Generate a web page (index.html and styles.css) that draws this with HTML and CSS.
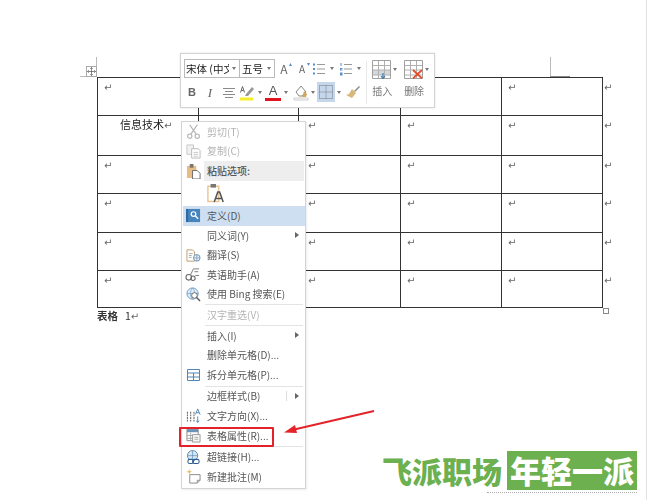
FILE: index.html
```html
<!DOCTYPE html>
<html lang="zh-CN">
<head>
    <meta charset="UTF-8">
    <title>表格属性</title>
    <link rel="stylesheet" href="styles.css">
</head>
<body>
<div class="page">
    <div class="doc">
        <table class="word-table">
            <colgroup><col class="c101"><col class="c100"><col class="c102"><col class="c101"><col class="c101"><col class="c17"></colgroup>
            <tr class="h38"><td><i>↵</i></td><td></td><td></td><td></td><td><i>↵</i></td><td class="end"><i>↵</i></td></tr>
            <tr class="h40"><td class="title">信息技术<i>↵</i></td><td></td><td><i>↵</i></td><td><i>↵</i></td><td><i>↵</i></td><td class="end"><i>↵</i></td></tr>
            <tr class="h38"><td><i>↵</i></td><td></td><td><i>↵</i></td><td><i>↵</i></td><td><i>↵</i></td><td class="end"><i>↵</i></td></tr>
            <tr class="h39"><td><i>↵</i></td><td></td><td><i>↵</i></td><td><i>↵</i></td><td><i>↵</i></td><td class="end"><i>↵</i></td></tr>
            <tr class="h38"><td><i>↵</i></td><td></td><td><i>↵</i></td><td><i>↵</i></td><td><i>↵</i></td><td class="end"><i>↵</i></td></tr>
            <tr class="h37"><td><i>↵</i></td><td></td><td><i>↵</i></td><td><i>↵</i></td><td><i>↵</i></td><td class="end"><i>↵</i></td></tr>
        </table>
        <p class="caption"><b>表格</b><span class="num">1</span><i>↵</i></p>
    </div>

    <span class="mark mark-h"></span>
    <span class="mark mark-v"></span>
    <span class="mark mark-r"></span>
    <span class="mark mark-rd"></span>
    <div class="move-handle">
        <svg width="9" height="9" viewBox="0 0 9 9"><path d="M4.5 .5v8M.5 4.5h8M3.2 1.8l1.3-1.3 1.3 1.3M3.2 7.2l1.3 1.3 1.3-1.3M1.8 3.2L.5 4.5l1.3 1.3M7.2 3.2l1.3 1.3-1.3 1.3" fill="none" stroke="#555" stroke-width=".7"/></svg>
    </div>
    <div class="size-handle"></div>

    <div class="toolbar">
        <div class="tools">
            <div class="tool-row">
                <div class="combo combo-font"><span>宋体 (中文</span><em class="caret"></em></div>
                <div class="combo combo-size"><span>五号</span><em class="caret"></em></div>
                <div class="btn w18"><span class="big-a">A</span><sup class="up">▴</sup></div>
                <div class="btn w18"><span class="small-a">A</span><sup class="down">▾</sup></div>
                <div class="btn">
                    <svg width="14" height="14" viewBox="0 0 14 14"><path d="M5 2.500h8M5 7h8M5 11.500h8" stroke="#999" fill="none"/><path d="M1 1.500h2v2H1zM1 6h2v2H1zM1 10.500h2v2H1z" fill="#5a8fc6"/></svg>
                </div>
                <em class="caret arrow"></em>
                <div class="btn ml2">
                    <svg width="14" height="14" viewBox="0 0 14 14"><path d="M5 2.500h8M5 7h8M5 11.500h8" stroke="#999" fill="none"/><path d="M1.500 1h1v3h-1zM1 6h2.500v1H2v.5h1.500v1H1zM1 10.500h2.500v3H1z" fill="#5a8fc6"/></svg>
                </div>
                <em class="caret arrow"></em>
            </div>
            <div class="tool-row">
                <div class="btn"><b class="bold">B</b></div>
                <div class="btn ml2"><span class="italic">I</span></div>
                <div class="btn ml3">
                    <svg width="14" height="14" viewBox="0 0 14 14"><path d="M1 3.500h12M3 6.500h8M1 9.500h12M3 12.500h8" stroke="#8a8a8a" fill="none"/></svg>
                </div>
                <div class="btn ml2">
                    <svg width="16" height="18" viewBox="0 0 16 18"><path d="M1 14.500h13v3H1z" fill="#f4ee2a"/><path d="M7 11l6-7 2 2-6 7H6z" fill="#999"/><path d="M1.500 9.500l2-6 2 6M2.500 7.500h2" stroke="#666" fill="none"/></svg>
                </div>
                <em class="caret arrow"></em>
                <div class="btn ml1 color-a">A</div>
                <em class="caret arrow"></em>
                <div class="btn ml3">
                    <svg width="16" height="18" viewBox="0 0 16 18"><path d="M3 9l5-6 5 6-4 4H6z" fill="#fff" stroke="#888"/><path d="M11 8l3 3-1 3H9z" fill="#d2a860"/><path d="M1 15h14v2H1z" fill="#fff" stroke="#ccc"/></svg>
                </div>
                <em class="caret arrow w9"></em>
                <div class="btn active">
                    <svg width="14" height="14" viewBox="0 0 14 14"><path d="M.5.500h13v13H.5zM7 .500v13M.5 7h13" stroke="#777" stroke-dasharray="1 1" fill="none"/></svg>
                </div>
                <em class="caret arrow w9"></em>
                <div class="btn ml2">
                    <svg width="16" height="16" viewBox="0 0 16 16"><path d="M9 7l5-5 1 1-5 5z" fill="#888"/><path d="M7 5l4 4-4 5-6-3 3-1z" fill="#d8b878"/></svg>
                </div>
            </div>
        </div>
        <div class="tool-sep"></div>
        <div class="big-btn">
            <div class="big-icon">
                <svg width="19" height="19" viewBox="0 0 19 19"><path d="M.5.500h18v18H.5z" fill="#fff" stroke="#a0a0a0"/><path d="M1 10h17v5H1z" fill="#d4d7dc"/><path d="M6.500 1v17M12.500 1v17M1 5.500h17M1 10h17M1 15h17" stroke="#b0b0b0" fill="none"/><path d="M11 13v5M9 16l2 2.500 2-2.500" stroke="#3f7cb0" stroke-width="1.200" fill="none"/></svg>
                <em class="caret"></em>
            </div>
            <span>插入</span>
        </div>
        <div class="big-btn">
            <div class="big-icon">
                <svg width="19" height="19" viewBox="0 0 19 19"><path d="M.5.500h18v18H.5z" fill="#fff" stroke="#a0a0a0"/><path d="M6.500 1v17M12.500 1v17M1 5.500h17M1 10h17M1 15h17" stroke="#b0b0b0" fill="none"/><path d="M9 10l9 8.500M18 10l-9 8.500" stroke="#e0502f" stroke-width="1.800" fill="none"/></svg>
                <em class="caret"></em>
            </div>
            <span>删除</span>
        </div>
    </div>

    <div class="menu">
        <div class="item off">
            <div class="ico"><svg width="15" height="15" viewBox="0 0 16 16"><circle cx="4" cy="13" r="2.300" fill="none" stroke="#b4b4b4" stroke-width="1.200"/><circle cx="12" cy="13" r="2.300" fill="none" stroke="#b4b4b4" stroke-width="1.200"/><path d="M5 11L12 1M11 11L4 1" stroke="#b4b4b4" stroke-width="1.200"/></svg></div>
            <span>剪切(T)</span>
        </div>
        <div class="item off">
            <div class="ico"><svg width="15" height="15" viewBox="0 0 16 16"><path d="M1 1h7v10H1z" fill="#f2f2f2" stroke="#c4c4c4"/><path d="M6 5h7l2 2v8H6z" fill="#fff" stroke="#b8b8b8"/><path d="M8 9h5M8 11h5M8 13h5" stroke="#c8c8c8"/></svg></div>
            <span>复制(C)</span>
        </div>
        <div class="item">
            <div class="ico"><svg width="15" height="16" viewBox="0 0 16 17"><path d="M1 3h10v13H1z" fill="#e6bd85"/><path d="M4 1h4v4H4z" fill="#777"/><path d="M7 8h5l3 3v6H7z" fill="#fff" stroke="#666"/></svg></div>
            <div class="paste-head">粘贴选项:</div>
        </div>
        <div class="item paste-row">
            <svg class="paste-a" width="18" height="20" viewBox="0 0 20 22"><path d="M1 3.500h12v17H1z" fill="#fff" stroke="#eac594" stroke-width="1.600"/><path d="M4 1h6v4H4z" fill="#777"/><path d="M8 21l4-11h2l4 11M10 17h6" stroke="#555" stroke-width="1.700" fill="none"/></svg>
        </div>
        <div class="item hover">
            <div class="ico"><svg width="15" height="15" viewBox="0 0 16 16"><path d="M0 1h3v14H0z" fill="#2a6aa5"/><path d="M3 1h12v14H3z" fill="#4584bd"/><circle cx="8" cy="6.500" r="2.500" fill="none" stroke="#fff" stroke-width="1.300"/><path d="M10 8.500l3 3" stroke="#fff" stroke-width="1.500"/></svg></div>
            <span>定义(D)</span>
        </div>
        <div class="item">
            <div class="ico"></div>
            <span>同义词(Y)</span>
            <em class="sub"></em>
        </div>
        <div class="item">
            <div class="ico"><svg width="15" height="15" viewBox="0 0 16 16"><path d="M1 2h6l2 2v10H1z" fill="#fff" stroke="#c09a6a"/><path d="M3 6h4M3 8h3M3 10h3" stroke="#aaa"/><circle cx="11.500" cy="10.500" r="3.500" fill="#e6eef6" stroke="#6b94b8"/><path d="M8 10.500h7M11.500 7v7" stroke="#6b94b8" stroke-width=".7"/></svg></div>
            <span>翻译(S)</span>
        </div>
        <div class="item">
            <div class="ico"><svg width="16" height="15" viewBox="0 0 17 16"><circle cx="4" cy="11" r="3" fill="none" stroke="#666" stroke-width="1.100"/><circle cx="8.500" cy="12" r="2.300" fill="none" stroke="#666" stroke-width="1.100"/><path d="M6 8l3-6h6M10 5h4M11 9h4" stroke="#777" fill="none"/></svg></div>
            <span>英语助手(A)</span>
        </div>
        <div class="item">
            <div class="ico"><svg width="15" height="15" viewBox="0 0 16 16"><circle cx="7" cy="7" r="6" fill="#e2edf7" stroke="#6b9ac4"/><path d="M1 7h12M7 1c-3 3-3 9 0 12M7 1c3 3 3 9 0 12" stroke="#6b9ac4" stroke-width=".7" fill="none"/><circle cx="9" cy="9" r="3" fill="#fff" stroke="#666"/><path d="M11 11l4 4" stroke="#555" stroke-width="1.500"/></svg></div>
            <span>使用 Bing 搜索(E)</span>
        </div>
        <div class="sep"></div>
        <div class="item off">
            <div class="ico"></div>
            <span>汉字重选(V)</span>
        </div>
        <div class="sep"></div>
        <div class="item">
            <div class="ico"></div>
            <span>插入(I)</span>
            <em class="sub"></em>
        </div>
        <div class="item">
            <div class="ico"></div>
            <span>删除单元格(D)...</span>
        </div>
        <div class="item">
            <div class="ico"><svg width="13" height="12" viewBox="0 0 13 12"><path d="M.5.500h12v11H.5zM.5 4h12M.5 8h12M6.500 4v7.500" fill="none" stroke="#4f86b8"/></svg></div>
            <span>拆分单元格(P)...</span>
        </div>
        <div class="sep sep-wide"></div>
        <div class="item">
            <div class="ico"></div>
            <span>边框样式(B)</span>
            <em class="sub sub-split"></em>
        </div>
        <div class="item">
            <div class="ico"><svg width="15" height="15" viewBox="0 0 16 16"><path d="M1.500 4v11M5 4v11M8.500 4v11" stroke="#666" stroke-width="1.100" stroke-dasharray="2 .8"/><path d="M10 7l2.500-6L15 7M11 5h3" stroke="#4f86b8" fill="none"/><path d="M12.500 9v6M11 13.500l1.500 2 1.500-2" stroke="#4f86b8" fill="none"/></svg></div>
            <span>文字方向(X)...</span>
        </div>
        <div class="item">
            <div class="ico"><svg width="15" height="15" viewBox="0 0 16 16"><path d="M1 1.500h12v12H1z" fill="#fff" stroke="#888"/><path d="M1 1.500h12v3H1z" fill="#6b94b8"/><path d="M5 5v8M1 8h6M1 11h6" stroke="#aaa"/><path d="M7 7h8v8H7z" fill="#f7f7f7" stroke="#999"/><path d="M9 10h4M9 12h4" stroke="#aaa"/></svg></div>
            <span>表格属性(R)...</span>
        </div>
        <div class="sep sep-wide"></div>
        <div class="item">
            <div class="ico"><svg width="15" height="15" viewBox="0 0 16 16"><circle cx="7" cy="6" r="5.500" fill="#d8e6f2" stroke="#5a8ab4"/><path d="M1.500 6h11M7 .500v11" stroke="#5a8ab4" stroke-width=".7"/><rect x="2" y="10" width="6" height="4.500" rx="2" fill="#fff" stroke="#2f5f90" stroke-width="1.100"/><rect x="7" y="10" width="7" height="4.500" rx="2" fill="none" stroke="#2f5f90" stroke-width="1.100"/></svg></div>
            <span>超链接(H)...</span>
        </div>
        <div class="item">
            <div class="ico"><svg width="15" height="15" viewBox="0 0 16 16"><path d="M4 6h11v6l-3 3H4z" fill="#fff" stroke="#888"/><path d="M12 15v-3h3" fill="none" stroke="#888"/><path d="M3.500 0l.8 2.200 2.200.8-2.200.8-.8 2.200-.8-2.200L.5 3l2.200-.8z" fill="#e9c060"/></svg></div>
            <span>新建批注(M)</span>
        </div>
    </div>
    <div class="red-box"></div>

    <svg class="red-arrow" width="100" height="30" viewBox="0 0 100 30">
        <path d="M91 1L9 20" stroke="#e3222a" stroke-width="1.800" fill="none"/>
        <path d="M1 22.500l11-7.500 2 8z" fill="#e3222a"/>
    </svg>

    <div class="brand">
        <div class="brand-name">飞派职场</div>
        <div class="brand-tag">年轻一派</div>
    </div>
    <div class="brand-dots"></div>
</div>
</body>
</html>
```

FILE: styles.css
```css
* {
    box-sizing: border-box;
}

body {
    margin: 0;
    background: #fff;
    font-family: "Noto Sans CJK SC", "Liberation Sans", sans-serif;
}

i, em {
    font-style: normal;
}

.page {
    position: relative;
    width: 647px;
    height: 500px;
    overflow: hidden;
    border-right: 1px solid #e2e2e2;
}

.doc {
    padding: 77px 0 0 97px;
    filter: blur(0.25px);
}

/* table */
.word-table {
    border-collapse: collapse;
    table-layout: fixed;
    width: 522px;
    font-size: 11px;
    color: #222;
}

.c100 { width: 100px; }
.c101 { width: 101px; }
.c102 { width: 102px; }
.c17 { width: 17px; }

.word-table td {
    border: 1px solid #333;
    padding: 1px 0 0 6px;
    vertical-align: top;
    line-height: 14px;
}

.word-table td:nth-child(3) {
    padding-left: 9px;
}

.word-table td.end {
    border: 0;
    padding-left: 1px;
}

.word-table td.title {
    padding-left: 22px;
}

.word-table i,
.caption i {
    font-family: "DejaVu Sans", sans-serif;
    font-size: 10px;
    color: #666;
}

.h37 { height: 37px; }
.h38 { height: 38px; }
.h39 { height: 39px; }
.h40 { height: 40px; }

.caption {
    margin: 1px 0 0;
    font-size: 10.500px;
    line-height: 14px;
    color: #333;
}

.num {
    margin-left: 7px;
}

/* crop marks and table handles */
.mark {
    position: absolute;
    background: #bbb;
}

.mark-h { left: 80px; top: 76px; width: 17px; height: 1px; }
.mark-v { left: 96px; top: 57px; width: 1px; height: 20px; }
.mark-r { left: 550px; top: 57px; width: 1px; height: 20px; }
.mark-rd { left: 550px; top: 76px; width: 20px; height: 1px; background: #888; }

.move-handle {
    position: absolute;
    left: 86px;
    top: 66px;
    width: 11px;
    height: 11px;
    border: 1px solid #aaa;
    background: #fff;
    line-height: 0;
}

.size-handle {
    position: absolute;
    left: 603px;
    top: 308px;
    width: 6px;
    height: 6px;
    border: 1px solid #888;
    background: #fff;
}

/* mini toolbar */
.toolbar {
    position: absolute;
    left: 180px;
    top: 53px;
    width: 255px;
    height: 55px;
    display: flex;
    padding: 5px 0 0 3px;
    background: #fff;
    border: 1px solid #d4d4d4;
    box-shadow: 0 0 2px rgba(0, 0, 0, 0.12);
    filter: blur(0.35px);
}

.tools {
    width: 183px;
}

.tool-row {
    display: flex;
    align-items: center;
    height: 19px;
    margin-bottom: 4px;
}

.tool-row + .tool-row {
    height: 20px;
}

.combo {
    display: flex;
    align-items: center;
    justify-content: space-between;
    height: 19px;
    padding: 0 3px 0 1px;
    border: 1px solid #bbb;
    font-size: 10.500px;
    color: #222;
    white-space: nowrap;
}

.combo-font { width: 56px; }
.combo-font span { width: 43px; overflow: hidden; }
.combo-size { width: 35px; border-left: 0; padding-left: 2px; }

.caret {
    display: inline-block;
    flex: none;
    width: 0;
    height: 0;
    border-left: 2.500px solid transparent;
    border-right: 2.500px solid transparent;
    border-top: 3px solid #777;
}

.arrow {
    margin: 0 2.500px;
}

.w9 {
    margin: 0 2px;
}

.btn {
    display: flex;
    align-items: center;
    justify-content: center;
    flex: none;
    width: 16px;
    height: 20px;
    color: #666;
    font-size: 12px;
    line-height: 1;
}

.w18 {
    width: 18px;
    position: relative;
}

.ml1 { margin-left: 1px; }
.ml2 { margin-left: 2px; }
.ml3 { margin-left: 3px; }

.big-a { font-size: 12px; }
.small-a { font-size: 10px; }

.up, .down {
    position: absolute;
    right: 1px;
    top: 2px;
    font-size: 6px;
    color: #5a8fc6;
}

.bold {
    font-family: "Liberation Sans", sans-serif;
    font-size: 11px;
}

.italic {
    font-family: "Liberation Serif", serif;
    font-style: italic;
    font-size: 13px;
}

.color-a {
    height: 18px;
    border-bottom: 3px solid #e0141c;
    font-family: "Liberation Sans", sans-serif;
    font-size: 13px;
    color: #555;
}

.active {
    width: 18px;
    background: #c5d7ec;
}

.tool-sep {
    width: 1px;
    height: 43px;
    margin: 2px 3px 0 0;
    background: #e8e8e8;
}

.big-btn {
    width: 32px;
    display: flex;
    flex-direction: column;
    font-size: 10px;
    color: #777;
    padding-left: 1px;
}

.big-btn span {
    margin-top: 5px;
    padding-left: 1px;
    line-height: 14px;
}

.big-icon {
    display: flex;
    align-items: center;
    gap: 2px;
    height: 20px;
    padding-left: 1px;
}

/* context menu */
.menu {
    position: absolute;
    left: 181px;
    top: 121px;
    width: 125px;
    height: 368px;
    padding: 0 0 0 1px;
    background: #fff;
    border: 1px solid #d4d4d4;
    box-shadow: 1px 1px 2px rgba(0, 0, 0, 0.08);
    font-size: 10px;
    color: #555;
    filter: blur(0.35px);
}

.item {
    position: relative;
    display: flex;
    align-items: center;
    height: 19.600px;
    white-space: nowrap;
}

.item span {
    margin-bottom: 1px;
}

.off {
    color: #b4b4b4;
}

.hover {
    background: #cddff1;
}

.ico {
    display: flex;
    align-items: center;
    justify-content: center;
    flex: none;
    width: 20px;
    height: 100%;
    margin-right: 4px;
    line-height: 0;
}

.paste-head {
    flex: 1;
    align-self: stretch;
    display: flex;
    align-items: center;
    margin-left: -3px;
    padding-left: 3px;
    margin-right: 1px;
    background: #eeeeee;
    font-weight: 500;
    color: #555;
}

.paste-row {
    height: 25.400px;
    padding-left: 24px;
}

.sep {
    height: 1px;
    margin-left: 22px;
    margin-right: 2px;
    background: #e4e4e4;
}

.sep-wide {
    margin-top: 1px;
}

.sub {
    position: absolute;
    right: 6px;
    top: 50%;
    margin-top: -3.500px;
    width: 0;
    height: 0;
    border-top: 3.500px solid transparent;
    border-bottom: 3.500px solid transparent;
    border-left: 4px solid #666;
}

.sub-split::before {
    content: "";
    position: absolute;
    left: -13px;
    top: -5px;
    width: 1px;
    height: 10px;
    background: #ddd;
}

.red-box {
    position: absolute;
    left: 179px;
    top: 427px;
    width: 95px;
    height: 20px;
    border: 2px solid #e3222a;
    border-radius: 1px;
}

.red-arrow {
    position: absolute;
    left: 283px;
    top: 410px;
}

/* logo */
.brand {
    position: absolute;
    left: 382px;
    top: 451px;
    display: flex;
    align-items: center;
    gap: 4px;
    font-weight: 900;
    color: #6db04f;
    white-space: nowrap;
}

.brand-name {
    width: 121px;
    font-size: 30px;
    line-height: 39px;
}

.brand-tag {
    width: 130px;
    height: 39px;
    background: #6db04f;
    color: #fff;
    font-size: 31px;
    line-height: 38px;
    text-align: center;
}

.brand-dots {
    position: absolute;
    left: 487px;
    top: 492px;
    width: 150px;
    border-top: 1px dotted #aaa;
}
```
